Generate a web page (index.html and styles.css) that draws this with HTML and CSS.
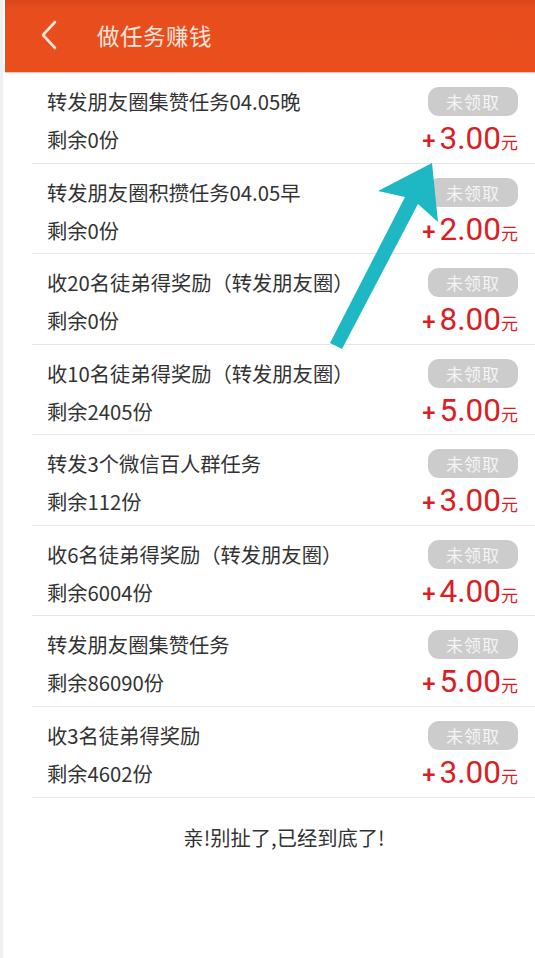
FILE: index.html
```html
<!DOCTYPE html>
<html lang="zh">
<head>
<meta charset="utf-8">
<link rel="stylesheet" href="styles.css">
</head>
<body>
<div class="page">
  <header class="topbar">
    <svg class="back" viewBox="0 0 20 32" width="20" height="32"><path d="M16 3 L4 16 L16 29" fill="none" stroke="#fbe3da" stroke-width="2.6" stroke-linecap="round" stroke-linejoin="round"/></svg>
    <h1 class="title">做任务赚钱</h1>
  </header>
  <ul class="list">
    <li class="row"><div class="info"><div class="name">转发朋友圈集赞任务04.05晚</div><div class="left">剩余0份</div></div><div class="side"><span class="badge">未领取</span><span class="price"><span class="plus">+</span><span class="num">3.00</span><span class="unit">元</span></span></div></li>
    <li class="row"><div class="info"><div class="name">转发朋友圈积攒任务04.05早</div><div class="left">剩余0份</div></div><div class="side"><span class="badge">未领取</span><span class="price"><span class="plus">+</span><span class="num">2.00</span><span class="unit">元</span></span></div></li>
    <li class="row"><div class="info"><div class="name">收20名徒弟得奖励（转发朋友圈）</div><div class="left">剩余0份</div></div><div class="side"><span class="badge">未领取</span><span class="price"><span class="plus">+</span><span class="num">8.00</span><span class="unit">元</span></span></div></li>
    <li class="row"><div class="info"><div class="name">收10名徒弟得奖励（转发朋友圈）</div><div class="left">剩余2405份</div></div><div class="side"><span class="badge">未领取</span><span class="price"><span class="plus">+</span><span class="num">5.00</span><span class="unit">元</span></span></div></li>
    <li class="row"><div class="info"><div class="name">转发3个微信百人群任务</div><div class="left">剩余112份</div></div><div class="side"><span class="badge">未领取</span><span class="price"><span class="plus">+</span><span class="num">3.00</span><span class="unit">元</span></span></div></li>
    <li class="row"><div class="info"><div class="name">收6名徒弟得奖励（转发朋友圈）</div><div class="left">剩余6004份</div></div><div class="side"><span class="badge">未领取</span><span class="price"><span class="plus">+</span><span class="num">4.00</span><span class="unit">元</span></span></div></li>
    <li class="row"><div class="info"><div class="name">转发朋友圈集赞任务</div><div class="left">剩余86090份</div></div><div class="side"><span class="badge">未领取</span><span class="price"><span class="plus">+</span><span class="num">5.00</span><span class="unit">元</span></span></div></li>
    <li class="row"><div class="info"><div class="name">收3名徒弟得奖励</div><div class="left">剩余4602份</div></div><div class="side"><span class="badge">未领取</span><span class="price"><span class="plus">+</span><span class="num">3.00</span><span class="unit">元</span></span></div></li>
  </ul>
  <p class="end">亲!别扯了,已经到底了!</p>
  <svg class="arrow" viewBox="0 0 535 958" width="535" height="958"><polygon points="432,163 378,191 405,197 330,343 342,349 418,204 438,222" fill="#1db8c4"/></svg>
</div>
</body>
</html>
```
FILE: styles.css
```css
* { box-sizing: border-box; }
html, body { margin: 0; padding: 0; background: #fff; }
body { font-family: "Noto Sans CJK SC", "Roboto", sans-serif; color: #333; }
.page { position: relative; width: 535px; height: 958px; overflow: hidden; border-left: 3px solid #f0f0f0; }
.topbar { height: 73px; margin-left: 2px; background: linear-gradient(#d9461b, #e84d1d 12%, #ea4e1d); display: flex; align-items: center; padding-left: 34px; border-bottom: 1px solid #f3c3b3; }
.back { display: block; margin-top: -2px; }
.title { margin: 0 0 0 38px; font-size: 22.5px; font-weight: 400; color: #fbe5dc; letter-spacing: 0.5px; line-height: 1; margin-top: -2px; }
.list { list-style: none; margin: 0; padding: 0 0 0 29px; }
.row { height: 90.57px; border-bottom: 1px solid #e6e6e6; display: flex; justify-content: space-between; padding: 0 17px 0 15px; }
.info { display: flex; flex-direction: column; padding-top: 14px; }
.name { font-size: 20.3px; line-height: 28px; color: #333; }
.left { font-size: 20.3px; line-height: 28px; margin-top: 10px; color: #333; }
.side { display: flex; flex-direction: column; align-items: flex-end; padding-top: 14px; }
.badge { width: 90px; height: 29px; border-radius: 11px; background: #cccccc; color: #f4f4f4; font-size: 17px; line-height: 29px; text-align: center; letter-spacing: 1px; }
.price { display: flex; align-items: baseline; color: #d91e25; margin-top: 6px; line-height: 34px; font-family: "Roboto", sans-serif; }
.plus { font-size: 24px; font-weight: 500; margin-right: 4px; }
.num { font-size: 31.5px; }
.unit { font-size: 17px; font-family: "Noto Sans CJK SC", sans-serif; }
.end { margin: 24px 0 0; text-align: center; font-size: 20.3px; color: #333; padding-left: 30px; }
.arrow { position: absolute; left: -3px; top: 0; pointer-events: none; }
```
